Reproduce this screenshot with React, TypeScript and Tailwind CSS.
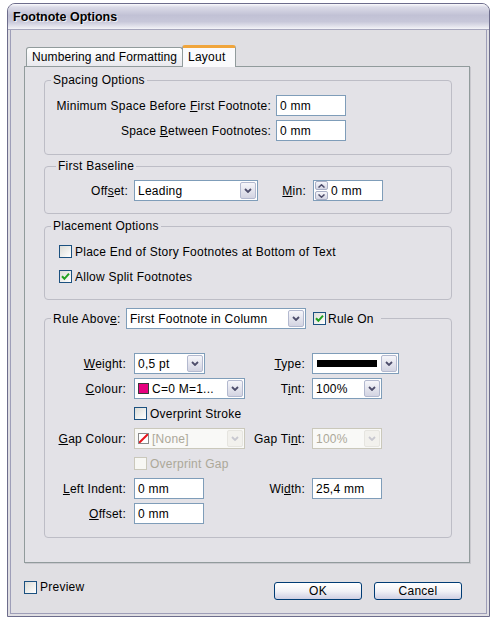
import React from 'react'

function Chevron({ dim }: { dim?: boolean }) {
  return (
    <svg width="8" height="5" viewBox="0 0 8 5">
      <path d="M1 1l3 3 3-3" fill="none" stroke={dim ? '#c8c8d0' : '#4d4d6b'} strokeWidth="1.8" />
    </svg>
  )
}

function Combo({ className, dim, children }: { className: string; dim?: boolean; children: React.ReactNode }) {
  return (
    <div
      className={`flex h-[21px] border ${
        dim ? 'border-[#cac8bb] bg-[#f9f9f7] text-[#aca899]' : 'border-[#7f9db9] bg-white text-black'
      } ${className}`}
    >
      <div className="flex-1 flex items-center pl-[3px] overflow-hidden whitespace-nowrap">{children}</div>
      <div
        className={`m-px w-[16px] rounded-[2px] border flex items-center justify-center ${
          dim ? 'border-[#e6e5e0] bg-[#f2f1ed]' : 'border-[#b3b9cf] bg-gradient-to-b from-[#f6f6fa] to-[#d3d4e2]'
        }`}
      >
        <Chevron dim={dim} />
      </div>
    </div>
  )
}

function TextBox({ className, value }: { className: string; value: string }) {
  return (
    <div className={`h-[21px] border border-[#7f9db9] bg-white flex items-center pl-[3px] ${className}`}>{value}</div>
  )
}

function Check({ checked, dim }: { checked?: boolean; dim?: boolean }) {
  return (
    <div
      className={`w-[13px] h-[13px] shrink-0 border flex items-center justify-center ${
        dim ? 'border-[#cac8bb] bg-[#f7f7f4]' : 'border-[#1c5180] bg-gradient-to-br from-[#dcdcd7] to-white'
      }`}
    >
      {checked && (
        <svg width="9" height="9" viewBox="0 0 9 9">
          <path d="M1 4.2l2.4 2.6L8 1.6" fill="none" stroke="#21a121" strokeWidth="2" />
        </svg>
      )}
    </div>
  )
}

function Spinner() {
  return (
    <div className="h-[21px] w-[70px] border border-[#7f9db9] bg-white flex items-center">
      <div className="flex flex-col gap-px ml-px">
        <div className="w-[13px] h-[9px] rounded-[2px] border border-[#a9afc6] bg-gradient-to-b from-[#f6f6fa] to-[#d3d4e2] flex items-center justify-center">
          <svg width="7" height="4" viewBox="0 0 7 4">
            <path d="M0.5 3.5L3.5 0.8 6.5 3.5" fill="none" stroke="#4d4d6b" strokeWidth="1.5" />
          </svg>
        </div>
        <div className="w-[13px] h-[9px] rounded-[2px] border border-[#a9afc6] bg-gradient-to-b from-[#f6f6fa] to-[#d3d4e2] flex items-center justify-center">
          <svg width="7" height="4" viewBox="0 0 7 4">
            <path d="M0.5 0.5L3.5 3.2 6.5 0.5" fill="none" stroke="#4d4d6b" strokeWidth="1.5" />
          </svg>
        </div>
      </div>
      <span className="ml-[3px]">0 mm</span>
    </div>
  )
}

function XPButton({ label }: { label: string }) {
  return (
    <div className="h-[18px] w-[88px] rounded-[3px] border border-[#003c74] bg-gradient-to-b from-white via-[#f2f2f6] to-[#cfcfe2] flex items-center justify-center">
      {label}
    </div>
  )
}

function Row({ children }: { children: React.ReactNode }) {
  return <div className="flex items-center h-[21px]">{children}</div>
}

export default function App() {
  return (
    <div className="w-[494px] h-[623px] bg-white pt-[3px] pl-[7px] font-['Liberation_Sans',Arial,sans-serif] text-[12px] tracking-[0.25px] text-black leading-[14px]">
      <div className="w-[483px] h-[614px] border border-[#6d6d8c] rounded-t-[8px] overflow-hidden flex flex-col bg-[#e0dfe3]">
        <div className="h-[26px] shrink-0 flex items-center pl-[5px] border-b border-[#a6a6bc] bg-[linear-gradient(to_bottom,#fbfbfd_0%,#dcdce8_12%,#c1c1d5_45%,#c7c7d9_70%,#e6e6ee_92%,#f4f4f8_100%)]">
          <span className="font-bold text-[12.5px] tracking-normal text-black [text-shadow:1px_1px_0_#f0f0f4]">
            Footnote Options
          </span>
        </div>
        <div className="flex-1 px-[2px] pb-[2px] flex">
          <div className="flex-1 min-w-0 border-x border-b border-[#9e9eb8] flex flex-col pl-[13px] pr-[16px] pt-[15px]">
            {/* tabs */}
            <div className="flex items-end h-[21px] pl-[2px]">
              <div className="h-[19px] w-[157px] border border-b-0 border-[#919b9c] rounded-t-[3px] bg-gradient-to-b from-white to-[#e9e9ee] pl-[5px] flex items-center whitespace-nowrap tracking-[0.1px]">
                Numbering and Formatting
              </div>
              <div className="relative z-10 -ml-px -mb-px h-[22px] w-[54px] border-x border-t-[3px] border-x-[#919b9c] border-t-[#f0a53c] rounded-t-[3px] bg-[#fafafc] pl-[5px] pt-[2px]">
                Layout
              </div>
            </div>
            {/* panel */}
            <div className="w-[446px] h-[497px] border border-[#919b9c] bg-[#e3e2e7] shadow-[1px_1px_0_#c9c8ce] pl-[19px] pr-[17px] pt-[6px] flex flex-col">
              <fieldset className="border border-[#bdbdc6] rounded-[4px] pb-[13px]">
                <legend className="ml-[6px] px-[2px]">Spacing Options</legend>
                <div className="mt-[8px] flex flex-col gap-[4px]">
                  <Row>
                    <div className="w-[226px] text-right whitespace-nowrap">
                      Minimum Space Before <u>F</u>irst Footnote:
                    </div>
                    <TextBox className="ml-[5px] w-[70px]" value="0 mm" />
                  </Row>
                  <Row>
                    <div className="w-[226px] text-right">
                      Space <u>B</u>etween Footnotes:
                    </div>
                    <TextBox className="ml-[5px] w-[70px]" value="0 mm" />
                  </Row>
                </div>
              </fieldset>

              <fieldset className="mt-[4px] border border-[#bdbdc6] rounded-[4px] pb-[12px]">
                <legend className="ml-[11px] px-[2px]">First Baseline</legend>
                <div className="mt-[7px]">
                  <Row>
                    <div className="w-[83px] text-right">
                      Off<u>s</u>et:
                    </div>
                    <Combo className="ml-[6px] w-[124px]">Leading</Combo>
                    <div className="w-[48px] text-right">
                      <u>M</u>in:
                    </div>
                    <div className="ml-[7px]">
                      <Spinner />
                    </div>
                  </Row>
                </div>
              </fieldset>

              <fieldset className="mt-[5px] border border-[#bdbdc6] rounded-[4px] pb-[12px]">
                <legend className="ml-[6px] px-[2px]">Placement Options</legend>
                <div className="mt-[8px] flex flex-col gap-[4px] pl-[14px]">
                  <Row>
                    <Check />
                    <span className="ml-[3px]">Place End of Story Footnotes at Bottom of Text</span>
                  </Row>
                  <Row>
                    <Check checked />
                    <span className="ml-[3px]">Allow Split Footnotes</span>
                  </Row>
                </div>
              </fieldset>

              <fieldset className="mt-[8px] border border-[#bdbdc6] rounded-[4px] pb-[13px]">
                <legend className="ml-[6px] px-[2px]">
                  <div className="flex items-center h-[21px] pr-[5px]">
                    <span className="w-[73px]">
                      Rule Abov<u>e</u>:
                    </span>
                    <Combo className="w-[180px]">First Footnote in Column</Combo>
                    <div className="ml-[7px]">
                      <Check checked />
                    </div>
                    <span className="ml-[2px]">Rule On</span>
                  </div>
                </legend>
                <div className="mt-[24px] flex flex-col gap-[4px]">
                  <Row>
                    <div className="w-[200px] flex items-center">
                      <div className="w-[81px] text-right">
                        <u>W</u>eight:
                      </div>
                      <Combo className="ml-[8px] w-[71px]">0,5 pt</Combo>
                    </div>
                    <div className="w-[60px] text-right">
                      <u>T</u>ype:
                    </div>
                    <Combo className="ml-[7px] w-[87px]">
                      <div className="w-[60px] h-[7px] bg-black ml-[1px]" />
                    </Combo>
                  </Row>
                  <Row>
                    <div className="w-[200px] flex items-center">
                      <div className="w-[81px] text-right">
                        <u>C</u>olour:
                      </div>
                      <Combo className="ml-[8px] w-[111px]">
                        <div className="w-[11px] h-[11px] bg-[#e6007e] border border-[#3a3a3a] shrink-0" />
                        <span className="ml-[3px]">C=0 M=1...</span>
                      </Combo>
                    </div>
                    <div className="w-[60px] text-right">
                      T<u>i</u>nt:
                    </div>
                    <Combo className="ml-[7px] w-[70px]">100%</Combo>
                  </Row>
                  <Row>
                    <div className="w-[81px]" />
                    <div className="ml-[8px] flex items-center">
                      <Check />
                      <span className="ml-[3px]">Overprint Stroke</span>
                    </div>
                  </Row>
                  <Row>
                    <div className="w-[200px] flex items-center">
                      <div className="w-[81px] text-right whitespace-nowrap">
                        <u>G</u>ap Colour:
                      </div>
                      <Combo dim className="ml-[8px] w-[111px]">
                        <div className="w-[11px] h-[11px] bg-white border border-[#8a8a8a] shrink-0">
                          <svg width="9" height="9" viewBox="0 0 9 9" className="block">
                            <path d="M0 9L9 0" stroke="#e8141b" strokeWidth="2" />
                          </svg>
                        </div>
                        <span className="ml-[3px]">[None]</span>
                      </Combo>
                    </div>
                    <div className="w-[60px] text-right whitespace-nowrap">
                      Gap Ti<u>n</u>t:
                    </div>
                    <Combo dim className="ml-[7px] w-[70px]">
                      100%
                    </Combo>
                  </Row>
                  <Row>
                    <div className="w-[81px]" />
                    <div className="ml-[8px] flex items-center">
                      <Check dim />
                      <span className="ml-[3px] text-[#aca899]">Overprint Gap</span>
                    </div>
                  </Row>
                  <Row>
                    <div className="w-[200px] flex items-center">
                      <div className="w-[81px] text-right whitespace-nowrap">
                        <u>L</u>eft Indent:
                      </div>
                      <TextBox className="ml-[8px] w-[70px]" value="0 mm" />
                    </div>
                    <div className="w-[60px] text-right">
                      Wi<u>d</u>th:
                    </div>
                    <TextBox className="ml-[7px] w-[70px]" value="25,4 mm" />
                  </Row>
                  <Row>
                    <div className="w-[81px] text-right">
                      <u>O</u>ffset:
                    </div>
                    <TextBox className="ml-[8px] w-[70px]" value="0 mm" />
                  </Row>
                </div>
              </fieldset>
            </div>
            {/* bottom row */}
            <div className="mt-[18px] flex items-start h-[19px] pr-[8px]">
              <Check />
              <span className="ml-[3px] -mt-px">Preview</span>
              <div className="ml-auto mt-px flex gap-[12px]">
                <XPButton label="OK" />
                <XPButton label="Cancel" />
              </div>
            </div>
          </div>
        </div>
      </div>
    </div>
  )
}
